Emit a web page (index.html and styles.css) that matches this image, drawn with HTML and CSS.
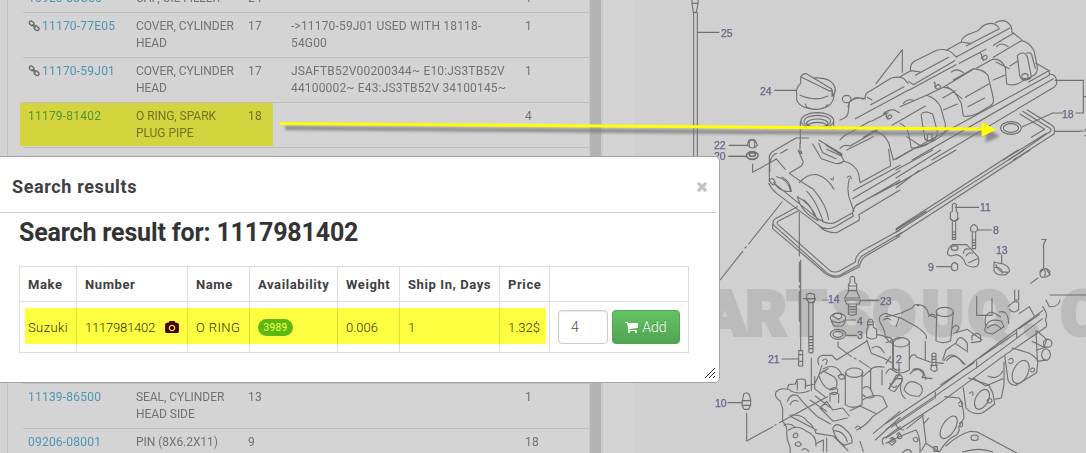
FILE: index.html
```html
<!DOCTYPE html>
<html lang="en">
<head>
<meta charset="utf-8">
<title>Search results</title>
<link rel="stylesheet" href="styles.css">
</head>
<body>
<svg class="defs" width="0" height="0">
  <symbol id="link" viewBox="0 0 12 12"><g fill="none" stroke="currentColor" stroke-width="1.3"><rect x="1" y="1.600" width="5.200" height="3.600" rx="1.700" transform="rotate(42 3.700 3.500)"/><rect x="5.800" y="6.400" width="5.200" height="3.600" rx="1.700" transform="rotate(42 8.500 8.300)"/><path d="M4.400 4.300l3.300 3.200"/></g></symbol>
</svg>
<div class="page">
  <main class="parts">
    <div class="row short"><a>10920-83C00</a><span>CAP, OIL FILLER</span><span>24</span><span></span><span>1</span></div>
    <div class="row"><a><svg class="link"><use href="#link"/></svg>11170-77E05</a><span>COVER, CYLINDER<br>HEAD</span><span>17</span><span>-&gt;11170-59J01 USED WITH 18118-<br>54G00</span><span>1</span></div>
    <div class="row"><a><svg class="link"><use href="#link"/></svg>11170-59J01</a><span>COVER, CYLINDER<br>HEAD</span><span>17</span><span>JSAFTB52V00200344~ E10:JS3TB52V<br>44100002~ E43:JS3TB52V 34100145~</span><span>1</span></div>
    <div class="row"><a>11179-81402</a><span>O RING, SPARK<br>PLUG PIPE</span><span>18</span><span></span><span>4</span></div>
    <div class="row covered"></div>
    <div class="row"><a>11139-86500</a><span>SEAL, CYLINDER<br>HEAD SIDE</span><span>13</span><span></span><span>1</span></div>
    <div class="row"><a>09206-08001</a><span>PIN (8X6.2X11)</span><span>9</span><span></span><span>18</span></div>
  </main>
  <div class="splitter"></div>
  <aside class="scheme">
    <svg class="drawing" viewBox="634 0 452 453">
      <text class="watermark" y="335" x="662 704 746 787 832 873 922 968 1022 1061">PARTSOUQ.C</text>
      <!-- dipstick, filler cap, small fasteners -->
      <g class="ink" transform="translate(600) scale(.33333)">
        <path d="M276 0v12l4 25h9l5-25V0M276 10h18M281 38v432M292 38v432M292 97h65M524 271h66M387 436h55M387 469h52"/>
        <path d="M602 250v-20q10-14 22-6l70 42q6 8 2 24v-14q0-8-6-2L602 230M640 234q56-4 66 32 2 10-8 20M602 250q-16 16-12 28v22q10 26 60 28 40-2 50-30l6-32M600 286q46 20 84 2M616 312l4 10q30 12 56 0l6-8"/>
        <ellipse cx="652" cy="362" rx="49" ry="24"/><ellipse cx="652" cy="364" rx="40" ry="18"/><ellipse cx="652" cy="370" rx="32" ry="13"/><path d="M601 364v66M701 364v24M622 374q30-14 60 0"/>
        <path d="M442 436l4-14q10-8 20 0l6 14q-14 16-30 0zM448 440v-16q8-8 16 0v16"/><ellipse cx="457" cy="467" rx="17" ry="12"/><ellipse cx="457" cy="464" rx="9" ry="5"/>
      </g>
      <!-- cylinder head cover, upper part -->
      <g class="ink" transform="translate(840) scale(.33333)">
        <path d="M108 251l79-102v68"/><ellipse cx="20" cy="297" rx="13" ry="11"/><path d="M30 304l14-10q16-4 24 4M28 308l-4 32q-2 12-24 20M24 320q0-20 30-26l22 2q-4-16 16-24l62-38q24-6 38 2l12 14M178 232l34-20q-4-20 14-30l66-32q28-6 46 10l12 12M320 150l44-24q0-16 30-26l20-8q24-28 50-20l12 10M466 68q26-14 42 4 8 8 8 24l28 22M46 356L206 270M82 292l14 8M92 314l100-54M212 212l30 4M226 226l100-54M364 126l26 4M378 138l100-52M208 270l140-76M206 244l14 10 124-72M350 170l160-86M358 190l80-42M460 136l60-36"/>
        <path d="M0 420q8-12 30-22l60-34M0 446q10-14 30-8l80-46M94 364l50-26M96 394q34 0 50 34l14 52M70 412l50-28M20 450l80-40M180 320l80-34q30 10 42 36l14 50v26q-30 28-74 40l-42-28M156 376l100-58M180 370q20 10 26 32l8 42q24 2 50-12M244 350q-4-14 18-14l16 6 14 52q0 22-18 28-16 4-20-8zM262 402v18q8 6 14-4v-14z"/>
        <path d="M260 286l50-24q26 0 40 24l14 24 6 38q20 4 44-8l30-18q20-8 16-28l-16-68q-14-18-44-20l-60 34M310 262l90-54M308 294l38-22M322 260l44 36M376 292l70-40M310 330l42-18M384 320l50-26"/>
        <path d="M410 204l48-26q24-4 38 24l4 50q24 8 46-8l28-14q24-8 16-40l-8-38q-14-26-38-30l-84 50M468 186l40 20M510 198l22-14M532 166q20-16 30 4l12 60q-4 12-24 10-12-6-12-22zM560 160q14-6 16 8l10 36M546 224q8-6 18 0v12h-18zM460 240l34-14"/>
        <path d="M130 342q14-14 34-12l14 8M190 310q14-16 34-8M334 216q18-14 36 2M470 140q14-16 34 0M420 160q8 4 4 14 6 8 14 4 8-10-2-12-12 2-6 16M282 246q6 4 2 14 6 10 14 6 8-8-2-12-12 2-8 12M134 336q8 6 4 14 6 10 14 4 8-8-2-10-10 4-6 14"/>
        <path d="M588 190l40 22v14L160 480M566 246l60-34M630 222q22 2 20 30l-8 10L276 480M640 236L216 480M646 241h84v98h-22M730 290h10M668 339h-30l-92 42M646 394h78"/>
        <ellipse cx="513" cy="384" rx="31" ry="19"/><ellipse cx="513" cy="384" rx="23" ry="13"/><path d="M562 330l74 46q12 8 6 26L520 480M548 334l84 52q4 6-6 12L506 480M540 342l74 46-40 24M620 400l-130 80"/>
      </g>
      <!-- cover front, gasket and leader lines -->
      <g class="ink" transform="translate(710 150) scale(.33333)">
        <path d="M56 19h52M128 42v25l70-39"/><ellipse cx="127" cy="16" rx="18" ry="11"/><ellipse cx="127" cy="13" rx="10" ry="6"/>
        <path d="M178 94V30q-4-20 18-30l62-36h38M180 64q-6-44 20-54M198 26l28 32M212 10l20-12M264 0l16 36-6 12-34 20M270-20v28q8 8 4-4M308-18l26 44 40 14q18 4 28-8l-8-14-44-20M326-30l70 42M348-14l48 30M326-20l12 28 40 18M402 34q34 8 44 38l4 26 80-44 12-6-6-50M362 86q10 8 8-4M412 82q8-10 12 4M268 98q24-28 54-24 30 8 50 44"/>
        <path d="M178 90q12-12 18 8l-4 6q-8 2-14-14M200 80q36 8 42 44-28 4-48-22M216 82q24 10 28 42M262 140q42 20 62 72-50-24-62-72M282 150q24 20 32 50M356 208q-6-44-46-90-40-24-72-48M340 216q-24-70-50-92M418 86q-10 40 4 70l10 28M430 122l140-76M428 146L570 62M440 166L570 90M176 100q8 18 24 30l126 96q20 18 50 4l54-32q-8-12 10-34L570 96M190 98l136 110q32 20 52 8l50-28M324 224q20 26 56 24l62-34q10-4 4-20L570 120M268 188v130M268 336v60M268 407v6M268 424v90M216 156L116 282M105 294l4-4M98 304L30 390"/>
        <path d="M262 170l-66 36q-12 8-4 20l158 142q22 16 42 6l52-28q0-18 12-28l118-70M266 182l-62 32q-6 4 0 10l156 138q16 8 30 0l46-26q0-18 18-32l116-64M188 222v14l160 136q28 16 46 6l54-28q6-24 20-32l102-60"/>
        <path d="M420 398v-14q8-10 14 0v14l6 4v22l10 20h-46l12-20v-22zM414 408h26M414 422h26M290 450v-16q10-8 24 0v16M280 446h36"/>
      </g>
      <!-- gasket run, bolts and rocker parts -->
      <g class="ink" transform="translate(896 150) scale(.33333)">
        <path d="M0 28L46 0M0 60L110 0M0 84L134 0M0 104L180 0M0 114l68-52M0 236L366 0M0 246L384 0M0 260L402 0M0 240l90-56M178 172h70M244 240h42M122 350h44M317 316v24M443 292v62M426 384l-22 16"/>
        <path d="M169 184v-20q6-8 12 0v20l4 4v18q-10 14-22 0v-18zM162 206q12 16 26 0M169 216v52h10v-52M169 246h10M169 254h10M169 262h10M224 232q10-16 20 0v10q-10 8-20 0zM229 246v50h10v-50M229 270h10M229 278h10M229 286h10M164 318q-14-4-8-16 8-24 28-18h28l34 36q6 16-2 28-16 8-34-4-8-26-30-30z"/><ellipse cx="176" cy="294" rx="10" ry="7"/><path d="M202 310q4-18 18-12M210 318q8-14 20-8M218 338l26-12M167 344q8-12 18 0v14q-10 8-18 0zM294 336l28 6q20 8 18 22l-10 10q-28 4-36-12zM300 344q8 26 34 22M298 352q22 0 20 18M434 366l10-10q10-2 18 8l-2 12-12 6"/><ellipse cx="440" cy="370" rx="8" ry="12"/><path d="M450 356l12 18"/>
      </g>
      <!-- cylinder head, left -->
      <g class="ink" transform="translate(700 300) scale(.33333)">
        <path d="M302-120v270M326 4v98l1 54q6 6 12 0V4M320-4h26l-4 12h-16zM327 110h12M327 119h12M327 128h12M327 137h12M327 146h12M334 174v98M246 177h48M296 152h12v46h-12zM296 164h12M296 184h12M84 308h40M128 300l3-18q8-6 16 0l5 18v16l-6 12h-14l-6-12zM126 302h26M130 316h20M140 340v83l78-43M224 376l4-2M238 368l144-78M436 60h30M440 106h30M414 126v14l40 30M462 174l6 3M478 182l30 20M484 2h52M434 0h48l-4 12h-38zM445 12v30q12 8 24 0V12M445 20h24M445 28h24M445 36h24"/>
        <ellipse cx="414" cy="54" rx="23" ry="14"/><path d="M398 48l6-8h18l4 12-10 6zM394 64l8 14h26l8-14"/><ellipse cx="414" cy="103" rx="23" ry="15"/><ellipse cx="414" cy="103" rx="15" ry="9"/>
        <path d="M240 302q-18-10-12-26 14-14 34-8l4-14 20-2 4-12q12-6 26 0l2 18 26-6 14-30 26-16M240 302l8 24v38q16 18 12 34l2 22q12 26 8 40M262 304q8-24 30-18l20 24 40 40 40 22M270 314q10-18 24-10M270 346q36-6 52 18 20 14 26 36M252 376q16-10 34 6M274 350L350 390M266 268q26 20 62 4M292 244v26M316 244v22M356 194q-8-24 12-28h28l14 14 90-56M368 182q8-10 14 0l-4 12M366 196l-10 30q20 54 50 40 12-20-4-36l-34-18M370 206q40-20 56 20M344 230v36l30 24M414 228q16-14 20 6-12 10-20-6M436 218v96q20 16 50 0v-96"/>
        <ellipse cx="463" cy="218" rx="26" ry="14"/><path d="M512 206v62M546 210v44M512 206q20-10 40-4M488 230l26-22M488 266q14-14 24 2l10 22q-20 10-34-6M502 66q10-18 18 0v16l10 6v24q-12 10-30 0V88l4-6zM502 66h18M502 74h18M530 104q26 0 36 20l14 8M500 120l14 40 36 14 26 14M516 144q20-14 36 14M540 66q-8-20 16-26l44 14M550 60q14-10 22 0M540 66q20 34 14 44 30 2 26 24v70q10 10 20 4M580 126q10-12 20-10M566 266l30-40M570 250q8 20 20 8M266 390q24-18 54 4 30 12 28 44M280 404q10-10 14 2-2 10-14 6zM286 430q10-10 18 2-4 12-18 4zM306 450q10-10 20 4M350 400l50 8 44 44M398 386q10-26 40 4 20 16 18 38l-22 8q-26-12-36-50M404 392q30 2 38 34M390 304v-22q14-10 26 0v26M380 304l18 26 30-6 20 24M380 304l-20 20 40 40 42-10M450 332l30-14 50 24M488 300q30-20 60-10l14 30-44 30M470 390q30-14 48-40M466 384q10-14 16 4M520 400l80-66M526 420L600 352M550 434q-10-20 10-24l40-30M570 416q10-8 14 4-4 10-14 4M590 404q10-12 10 0M480 424l10 30M350 430l20-10v34M380 414v40M390 270q14-14 24 0-4 20-24 10M346 288l44 34M330 300l50 34"/>
      </g>
      <!-- cylinder head, right -->
      <g class="ink" transform="translate(886 300) scale(.33333)">
        <path d="M0 370L150 270 270 180 390 90 470 32M0 388L150 286 276 200 396 112 470 56M16 382L144 296M164 254l100-66M280 174L392 98M400 86l60-42M0 414L160 310 350 170 476 84M148 276v18M272 184v20M392 92v20M470 20q18 24 8 40 10 20-4 24M28 370q8 20 26 20M112 346l-50 40"/>
        <ellipse cx="44" cy="127" rx="26" ry="14"/><path d="M20 128v82q20 18 50 0v-84M39 192v34M28 230q10-12 20 0v14l-22 30q-14 0-16-10zM28 236h20"/>
        <ellipse cx="176" cy="36" rx="26" ry="14"/><path d="M152 38l-2 84q18 12 44 0l8-84M272-10v56h46v-50M0 50q20-2 44-10l34-16M30 80l10-28 52 28q36 26 28 36M80 22q6-14 18-4M92 14q30-2 36 30l24 10M128 50q10-14 20-2M0 128l16-6M0 190l14-20M0 220q10-20 20-10M70 180q4-20 20-14M72 222q10-14 26-14 22 14 10 24l30 4M54 270q12-42 50-14 12 18-4 32-30 4-46-18M50 236q-16 40 8 60M80 210q16-10 32 4l8 24M118 124v54M90 170l42 16 40 4M138 162q8-6 12 0v32l4 14q-8 12-20 0l4-14zM138 170h12M138 178h12M134 196h20M174 182q20-34 52 0l12 12M182 182q24-30 50 10M170 180l10-30 28-20M200 84q10-16 20 0l-8 10M210 130q10-34 34 0v26M210 132l30 20M258 120v-12q16-16 26 0v16l-28 4M204 100l40-12 44 32M296 90q8-40 50-26l8 16-34 22q-22-2-24-12M304 84q22-20 40 0M300 80q-10-40 18-44l26 14M340 36q26-8 28 34M366 20l14-12q10-8 18 0v20q-14 16-28 0M386-30v30h12v-30M400 40l30-20 14 26M480 0l10 20q28 2 32-20"/>
        <path d="M110 346l10 82-14 24M128 354l-14 16M120 430l40 26q24-40 50-50 14-14 8-24l16-28q-2-40-14-60l-44-4"/><ellipse cx="188" cy="382" rx="19" ry="38" transform="rotate(32 188 382)"/><path d="M144 440h10v14h-10zM218 310q10-14 12 4-4 10-12 2M220 370q10-10 10 6-6 10-10 0M232 264l8 60q22 24 50 14 16-10 36-26l-6-34-12-24-60-20"/><ellipse cx="288" cy="298" rx="19" ry="32" transform="rotate(28 288 298)"/><path d="M250 280q14-12 10 6M304 300q10-10 14 2-4 12-14 4zM326 298l20-4 8-40V186M262 234l38 24 50-22M306 228q28 14 44-14M356 166l10 74q6 16 24 16l62-38 4-36q-14-18-30-24l-48-14M368 180q10-12 14 4-4 10-14 4"/><ellipse cx="404" cy="216" rx="22" ry="37" transform="rotate(26 404 216)"/><path d="M434 208q8-8 12 0-2 12-12 6M450 92l4 90M454 94l28 24-8 24-36-18"/><ellipse cx="485" cy="130" rx="13" ry="12"/><ellipse cx="480" cy="164" rx="13" ry="17"/><path d="M452 150l28-8M454 184l26-4M180 438q40-36 74-44l20 2 120 64M230 456q50-16 90 0"/>
        <ellipse cx="266" cy="413" rx="11" ry="8"/><path d="M0 430q50-26 90-40 14 20 12 68M8 428l14-14 8 10-12 12zM34 410q8-14 14 0-2 10-14 4M82 416q10-10 14 4-4 12-14 0zM48 460q20-22 30 0M492-15h110"/>
      </g>
      <g class="leader"><path d="M822 300h7M862 300h18M1080 131h6"/></g>
      <g class="nums">
        <text x="721" y="37">25</text><text x="760" y="95">24</text><text x="714" y="149">22</text><text x="714" y="160">20</text>
        <text x="1062" y="118">18</text><text x="1084" y="136">1</text><text x="980" y="211">11</text><text x="993" y="234">8</text><text x="996" y="254">13</text><text x="1041" y="247">7</text><text x="928" y="271">9</text>
        <text x="828" y="303">14</text><text x="880" y="305">23</text><text x="857" y="325">4</text><text x="857" y="339">3</text><text x="896" y="363">2</text><text x="768" y="363">21</text><text x="715" y="407">10</text>
      </g>
    </svg>
  </aside>
</div>
<div class="mark part-mark"></div>
<svg class="arrow" viewBox="0 0 1086 453"><g class="arrow-shadow"><path d="M285 128L984 134" stroke-width="4"/><path d="M987 129l12 7-13 6z"/></g><g class="arrow-body"><path d="M280 123.600L984 129" stroke-width="3"/><path d="M981.700 122L996 129.700L981.700 136.700z" stroke="none"/></g></svg>
<section class="modal">
  <header><h1>Search results</h1><svg class="close" viewBox="302 366 1188 1188"><path d="M1490 1322q0 40-28 68l-136 136q-28 28-68 28t-68-28l-294-294-294 294q-28 28-68 28t-68-28l-136-136q-28-28-28-68t28-68l294-294-294-294q-28-28-28-68t28-68l136-136q28-28 68-28t68 28l294 294 294-294q28-28 68-28t68 28l136 136q28 28 28 68t-28 68l-294 294 294 294q28 28 28 68z"/></svg></header>
  <h2>Search result for: 1117981402</h2>
  <table>
    <colgroup><col class="c1"><col class="c2"><col class="c3"><col class="c4"><col class="c5"><col class="c6"><col class="c7"><col class="c8"></colgroup>
    <tr><th>Make</th><th>Number</th><th>Name</th><th>Availability</th><th>Weight</th><th>Ship In, Days</th><th>Price</th><th></th></tr>
    <tr><td>Suzuki</td><td><span class="number">1117981402<svg viewBox="0 0 1920 1664"><path d="M960 672q119 0 203.500 84.500t84.500 203.500-84.500 203.500-203.500 84.500-203.500-84.500-84.500-203.500 84.500-203.500 203.500-84.500zm704-416q106 0 181 75t75 181v896q0 106-75 181t-181 75h-1408q-106 0-181-75t-75-181v-896q0-106 75-181t181-75h224l51-136q19-49 69.500-84.500t103.500-35.500h512q53 0 103.500 35.500t69.500 84.500l51 136h224zm-704 1152q185 0 316.500-131.500t131.500-316.500-131.500-316.500-316.500-131.500-316.500 131.500-131.500 316.500 131.500 316.500 316.500 131.500z"/></svg></span></td><td>O RING</td><td><span class="badge">3989</span></td><td class="tight">0.006</td><td>1</td><td class="tight">1.32$</td>
    <td><div class="actions"><span class="qty">4</span><button><svg viewBox="64 256 1664 1408"><path d="M704 1536q0 52-38 90t-90 38-90-38-38-90 38-90 90-38 90 38 38 90zm896 0q0 52-38 90t-90 38-90-38-38-90 38-90 90-38 90 38 38 90zm128-1088v512q0 24-16.500 42.500t-40.500 21.500l-1044 122q13 60 13 70 0 16-24 64h920q26 0 45 19t19 45-19 45-45 19h-1024q-26 0-45-19t-19-45q0-11 8-31.500t16-36 21.500-40 15.500-29.500l-177-823h-204q-26 0-45-19t-19-45 19-45 45-19h256q16 0 28.500 6.500t19.500 15.500 13 24.500 8 26 5.500 29.500 4.500 26h1201q26 0 45 19t19 45z"/></svg><span>Add</span></button></div></td></tr>
  </table>
  <div class="mark result-mark"></div>
  <svg class="grip" viewBox="0 0 12 12"><path d="M1 11L11 1M5 11l6-6M9 11l2-2"/></svg>
</section>
</body>
</html>
```
FILE: styles.css
```css
* { box-sizing: border-box; }
body { margin: 0; height: 453px; overflow: hidden; position: relative; background: #d4d4d4; font-family: Roboto, sans-serif; }
.defs { position: absolute; }
.page { display: flex; height: 453px; overflow: hidden; }
.parts { flex: none; margin-left: 7px; width: 582px; border-left: 1px solid #c2c2c2; padding-left: 15px; margin-top: -16px; height: 480px; }
.row { display: grid; grid-template-columns: 108px 112px 43px 234px 69px; height: 45px; padding: 5px 0 0 5px; border-top: 1px solid #bfbfbf; font-size: 12px; line-height: 17px; letter-spacing: .17px; color: #727272; white-space: nowrap; }
.row span:nth-child(2) { letter-spacing: -.05px; }
.row.short { height: 28px; }
.row.covered { height: 236px; }
.row a { color: #5094b5; letter-spacing: .22px; }
.link { width: 12px; height: 12px; margin-right: 2px; vertical-align: -2px; color: #666; }
.splitter { flex: none; width: 14px; background: #b3b3b3; border-left: 1px solid #cacaca; border-right: 2px solid #cbcbcb; }
.scheme { flex: 1; display: flex; padding-left: 31px; }
.drawing { width: 452px; height: 453px; background: #d0d0d0; }
.ink { fill: none; stroke: #707070; stroke-width: 3.300; stroke-linejoin: round; stroke-linecap: round; }
.leader { stroke: #858585; fill: none; }
.watermark { font: 900 62px Roboto, sans-serif; fill: #bbb; stroke: #bbb; stroke-width: 4; }
.nums { font: 10.500px "Liberation Sans", sans-serif; fill: #666687; stroke: #666687; stroke-width: .25; }
.mark { position: absolute; mix-blend-mode: multiply; background: #ffff40; }
.part-mark { left: 20px; top: 103px; width: 253px; height: 43px; background: #ffff4c; }
.arrow { position: absolute; inset: 0; width: 1086px; height: 453px; }
.arrow-shadow { stroke: #777; fill: #777; opacity: .8; filter: blur(1.500px); }
.arrow-body { stroke: #ff0; fill: #ff0; }
.modal { position: absolute; left: -2px; top: 156px; width: 722px; height: 227px; padding: 0 3px 0 1px; border: 1px solid #a5a5a5; border-radius: 0 5px 5px 0; background: #fefefe; color: #333; }
.modal header { height: 56px; padding: 4px 9px 0 12px; display: flex; align-items: center; justify-content: space-between; border-bottom: 1px solid #ccc; }
h1 { margin: 0; font-size: 18px; line-height: 24px; font-weight: 700; letter-spacing: .62px; color: #404040; }
.close { width: 10px; height: 10px; fill: #c4c4c4; }
h2 { margin: 3px 0 0 19px; font-size: 25px; line-height: 33px; font-weight: 700; letter-spacing: -.16px; }
table { table-layout: fixed; width: 670px; margin: 17px 0 0 19px; border-collapse: collapse; font-size: 13px; letter-spacing: .4px; }
th, td { border: 1px solid #ddd; padding: 0 0 0 8px; text-align: left; white-space: nowrap; }
th { height: 35px; font-weight: 700; color: #404040; letter-spacing: .6px; }
td { height: 51px; font-weight: 300; }
.tight { letter-spacing: 0; }
.c1 { width: 57px; } .c2 { width: 111px; } .c3 { width: 62px; } .c4 { width: 88px; } .c5 { width: 62px; } .c6 { width: 100px; } .c7 { width: 50px; } .c8 { width: 139px; }
.number { display: flex; align-items: center; gap: 10px; letter-spacing: -.2px; }
.number svg { width: 14px; height: 12px; fill: #4a0000; }
.badge { display: flex; width: 35px; height: 17px; align-items: center; justify-content: center; border-radius: 9px; background: #5cb85c; color: #fff; font-size: 10px; font-weight: 400; }
.actions { display: flex; gap: 4px; color: #555; }
.qty { width: 50px; height: 34px; padding-left: 12px; line-height: 32px; border: 1px solid #ccc; border-radius: 4px; box-shadow: inset 0 1px 1px rgba(0,0,0,.08); font-size: 14px; }
button { display: flex; align-items: center; justify-content: center; gap: 4px; width: 68px; height: 34px; padding: 0; border: 1px solid #51a351; border-radius: 4px; background: linear-gradient(#62c462, #51a351); color: #fff; font: 300 14px Roboto, sans-serif; text-shadow: 0 -1px 0 rgba(0,0,0,.25); }
button svg { width: 13px; height: 11px; fill: #fff; }
.result-mark { left: 26px; top: 151px; width: 521px; height: 36px; }
.grip { position: absolute; right: 3px; bottom: 3px; width: 12px; height: 12px; stroke: #333; }
```
